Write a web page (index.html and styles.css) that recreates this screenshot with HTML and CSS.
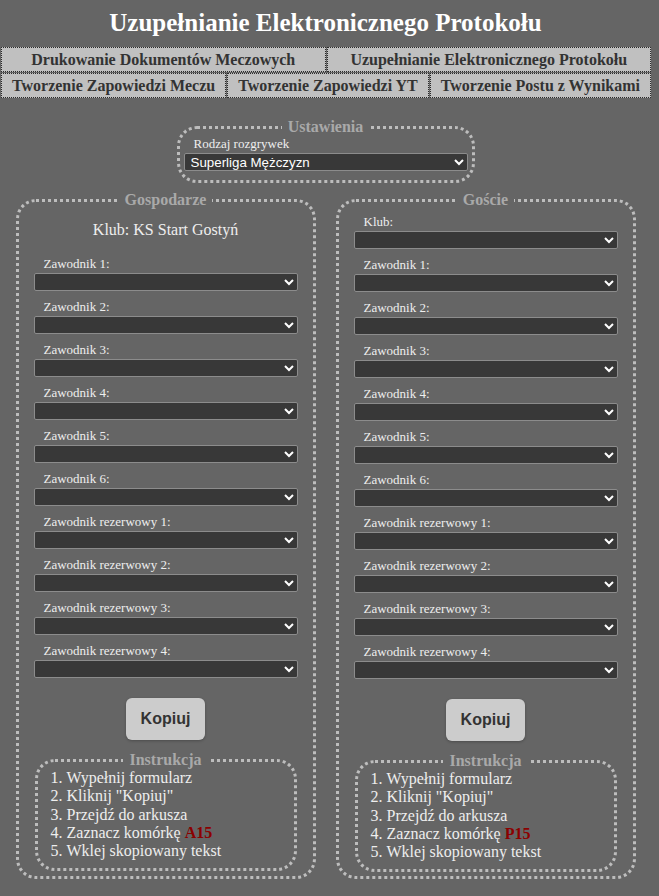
FILE: index.html
```html
<!DOCTYPE html>
<html lang="pl">
<head>
<meta charset="utf-8">
<title>Uzupełnianie Elektronicznego Protokołu</title>
<link rel="stylesheet" href="styles.css">
</head>
<body>
<div class="page">
  <h1 class="title">Uzupełnianie Elektronicznego Protokołu</h1>
  <nav class="nav">
    <div class="nav-row nav-row-even">
      <a class="nav-link">Drukowanie Dokumentów Meczowych</a>
      <a class="nav-link">Uzupełnianie Elektronicznego Protokołu</a>
    </div>
    <div class="nav-row">
      <a class="nav-link">Tworzenie Zapowiedzi Meczu</a>
      <a class="nav-link">Tworzenie Zapowiedzi YT</a>
      <a class="nav-link">Tworzenie Postu z Wynikami</a>
    </div>
  </nav>

  <fieldset class="box settings">
    <legend class="legend">Ustawienia</legend>
    <div class="group">
      <label class="label">Rodzaj rozgrywek</label>
      <select class="select"><option>Superliga Mężczyzn</option></select>
    </div>
  </fieldset>

  <div class="teams">
    <fieldset class="box team">
      <legend class="legend">Gospodarze</legend>
      <div class="club">Klub: KS Start Gostyń</div>
      <div class="groups">
        <div class="group"><label class="label">Zawodnik 1:</label><select class="select"></select></div>
        <div class="group"><label class="label">Zawodnik 2:</label><select class="select"></select></div>
        <div class="group"><label class="label">Zawodnik 3:</label><select class="select"></select></div>
        <div class="group"><label class="label">Zawodnik 4:</label><select class="select"></select></div>
        <div class="group"><label class="label">Zawodnik 5:</label><select class="select"></select></div>
        <div class="group"><label class="label">Zawodnik 6:</label><select class="select"></select></div>
        <div class="group"><label class="label">Zawodnik rezerwowy 1:</label><select class="select"></select></div>
        <div class="group"><label class="label">Zawodnik rezerwowy 2:</label><select class="select"></select></div>
        <div class="group"><label class="label">Zawodnik rezerwowy 3:</label><select class="select"></select></div>
        <div class="group"><label class="label">Zawodnik rezerwowy 4:</label><select class="select"></select></div>
      </div>
      <div class="actions"><button class="copy-btn">Kopiuj</button></div>
      <fieldset class="box instr">
        <legend class="legend">Instrukcja</legend>
        <ol class="steps">
          <li>Wypełnij formularz</li>
          <li>Kliknij "Kopiuj"</li>
          <li>Przejdź do arkusza</li>
          <li>Zaznacz komórkę <b class="cell">A15</b></li>
          <li>Wklej skopiowany tekst</li>
        </ol>
      </fieldset>
    </fieldset>

    <fieldset class="box team">
      <legend class="legend">Goście</legend>
      <div class="groups groups-guest">
        <div class="group"><label class="label">Klub:</label><select class="select"></select></div>
        <div class="group"><label class="label">Zawodnik 1:</label><select class="select"></select></div>
        <div class="group"><label class="label">Zawodnik 2:</label><select class="select"></select></div>
        <div class="group"><label class="label">Zawodnik 3:</label><select class="select"></select></div>
        <div class="group"><label class="label">Zawodnik 4:</label><select class="select"></select></div>
        <div class="group"><label class="label">Zawodnik 5:</label><select class="select"></select></div>
        <div class="group"><label class="label">Zawodnik 6:</label><select class="select"></select></div>
        <div class="group"><label class="label">Zawodnik rezerwowy 1:</label><select class="select"></select></div>
        <div class="group"><label class="label">Zawodnik rezerwowy 2:</label><select class="select"></select></div>
        <div class="group"><label class="label">Zawodnik rezerwowy 3:</label><select class="select"></select></div>
        <div class="group"><label class="label">Zawodnik rezerwowy 4:</label><select class="select"></select></div>
      </div>
      <div class="actions"><button class="copy-btn">Kopiuj</button></div>
      <fieldset class="box instr">
        <legend class="legend">Instrukcja</legend>
        <ol class="steps">
          <li>Wypełnij formularz</li>
          <li>Kliknij "Kopiuj"</li>
          <li>Przejdź do arkusza</li>
          <li>Zaznacz komórkę <b class="cell">P15</b></li>
          <li>Wklej skopiowany tekst</li>
        </ol>
      </fieldset>
    </fieldset>
  </div>
</div>
</body>
</html>
```

FILE: styles.css
```css
* { box-sizing: border-box; }

html, body {
  margin: 0;
  padding: 0;
  background: #656565;
}

body {
  font-family: "Liberation Serif", "Times New Roman", serif;
  color: #eeeeee;
  overflow: hidden;
}

.page {
  width: 651px;
  display: flex;
  flex-direction: column;
  align-items: center;
}

.title {
  margin: 0;
  padding-top: 8px;
  font-size: 25px;
  line-height: 30px;
  font-weight: bold;
  color: #ffffff;
  text-align: center;
}

.nav {
  align-self: stretch;
  margin-top: 9px;
  padding-left: 1px;
  display: flex;
  flex-direction: column;
  gap: 1px;
}

.nav-row {
  display: flex;
  gap: 1px;
}

.nav-link {
  flex: 1 1 auto;
  background: #c0c0c0;
  border: 1px dotted #2a2a2a;
  color: #333333;
  font-weight: bold;
  font-size: 16px;
  line-height: 23px;
  text-align: center;
  white-space: nowrap;
}

.nav-row-even .nav-link {
  flex: 1 1 0;
}

.box {
  margin: 0;
  border: 3px dotted #bdbdbd;
  border-radius: 20px;
  min-width: 0;
}

.legend {
  margin: 0 auto;
  padding: 0 6px;
  color: #a9a9a9;
  font-weight: bold;
  font-size: 16px;
  line-height: 18px;
}

.settings {
  width: 298px;
  margin-top: 20px;
  padding: 0 4px 9px;
}

.group {
  display: flex;
  flex-direction: column;
}

.label {
  font-size: 13px;
  line-height: 16px;
  margin-left: 10px;
  margin-bottom: 1px;
  color: #eeeeee;
}

.select {
  width: 100%;
  height: 18px;
  margin: 0;
  padding: 0 2px;
  background: #383838;
  color: #ffffff;
  border: 1px solid #8c8c8c;
  border-radius: 2px;
  font-family: "Liberation Sans", Arial, sans-serif;
  font-size: 13.333px;
}

.teams {
  margin-top: 8px;
  display: flex;
  gap: 20px;
}

.team {
  width: 300px;
  padding: 0 15px 4px;
}

.club {
  margin-top: 12px;
  font-size: 16px;
  line-height: 18px;
  text-align: center;
  color: #eeeeee;
}

.groups {
  margin-top: 17px;
  display: flex;
  flex-direction: column;
  gap: 8px;
}

.groups-guest {
  margin-top: 5px;
}

.actions {
  margin-top: 20px;
  display: flex;
  justify-content: center;
}

.copy-btn {
  width: 79px;
  height: 42px;
  padding: 0;
  background: #cccccc;
  color: #333333;
  border: none;
  border-radius: 6px;
  box-shadow: 0 1px 3px rgba(0, 0, 0, 0.25);
  font-family: "Liberation Sans", Arial, sans-serif;
  font-weight: bold;
  font-size: 16px;
}

.instr {
  margin: 11px 1px 0;
  padding: 0 0 8px;
}

.steps {
  margin: 0;
  padding-left: 29px;
  font-size: 16px;
  line-height: 18.25px;
  color: #eeeeee;
}

.cell {
  color: #8b0000;
}
```
